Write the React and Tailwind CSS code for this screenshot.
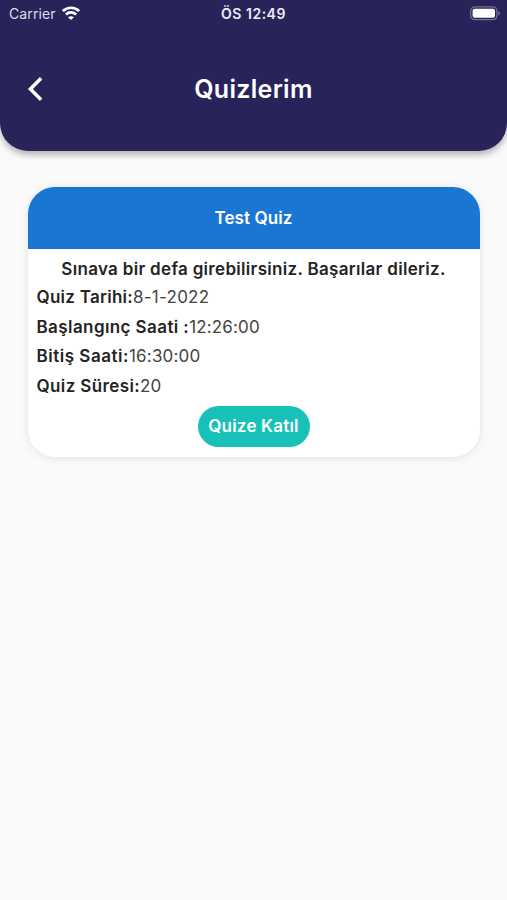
import React from "react";

const details = [
  { label: "Quiz Tarihi:", value: "8-1-2022", labelClass: "tracking-[0.27px]", valueClass: "tracking-[0.25px]" },
  { label: "Başlangınç Saati :", value: "12:26:00", labelClass: "tracking-[0.41px]", valueClass: "tracking-[0.15px]" },
  { label: "Bitiş Saati:", value: "16:30:00", labelClass: "tracking-[0.52px]", valueClass: "tracking-[0.2px]" },
  { label: "Quiz Süresi:", value: "20", labelClass: "tracking-[0.38px]", valueClass: "tracking-[0.1px]" },
];

function WifiIcon() {
  return (
    <svg className="-mt-px h-[14px] w-[18px]" viewBox="0 0 18 14" fill="none" stroke="white" strokeWidth="2.7">
      <path d="M0.9 5.1C5.4 0.6 12.6 0.6 17.1 5.1" />
      <path d="M3.9 8.5C6.7 5.7 11.3 5.7 14.1 8.5" />
      <path d="M9 14L6 11.2C7.6 9.8 10.4 9.8 12 11.2Z" fill="white" stroke="none" />
    </svg>
  );
}

function BatteryIcon() {
  return (
    <svg className="h-[15px] w-[31px]" viewBox="0 0 31 15" fill="none">
      <rect x="0.7" y="0.9" width="26.2" height="12.8" rx="4" stroke="#76729a" strokeWidth="1.2" />
      <rect x="2.6" y="2.8" width="22.4" height="9" rx="2" fill="white" />
      <path d="M28.3 5.1C30.5 5.9 30.5 8.7 28.3 9.5Z" fill="#76729a" />
    </svg>
  );
}

function Header() {
  return (
    <header className="h-[151px] rounded-b-[28px] bg-[#282359] text-white shadow-[0_4px_6px_rgba(0,0,0,0.28)]">
      <div className="grid h-[27px] grid-cols-3 items-center pl-[6px] pr-[6px]">
        <div className="flex items-center gap-[6px] pl-[3px] text-[14px] text-[#dedde8]">
          <span className="tracking-[0.12px]">Carrier</span>
          <WifiIcon />
        </div>
        <span className="text-center text-[14px] font-semibold tracking-[0.5px] text-[#eeedf5]">ÖS 12:49</span>
        <div className="flex justify-end">
          <BatteryIcon />
        </div>
      </div>
      <div className="grid h-[124px] grid-cols-[60px_1fr_60px] items-center">
        <button className="pl-[27px]" aria-label="Geri">
          <svg className="h-[26px] w-[17px]" viewBox="0 0 17 26" fill="none" stroke="white" strokeWidth="3.5">
            <path d="M14.1 2.3L3.4 13L14.1 23.7" />
          </svg>
        </button>
        <h1 className="text-center text-[25px] font-semibold leading-[30px] tracking-[0.3px]">Quizlerim</h1>
      </div>
    </header>
  );
}

function QuizCard() {
  return (
    <section className="mx-[27.5px] mt-[35.5px] h-[270px] overflow-hidden rounded-[27px] bg-white text-[17px] leading-[29.7px] text-[#242424] shadow-[0_1px_8px_rgba(0,0,0,0.1)]">
      <h2 className="flex h-[62.5px] items-center justify-center bg-[#1976d2] pt-[2px] font-semibold tracking-[0.1px] text-white">Test Quiz</h2>
      <div className="px-[9px] pt-[6px] whitespace-nowrap">
        <p className="text-center font-semibold leading-[28px] tracking-[0.31px]">Sınava bir defa girebilirsiniz. Başarılar dileriz.</p>
        {details.map((item) => (
          <p key={item.label}>
            <span className={`font-semibold ${item.labelClass}`}>{item.label}</span>
            <span className={`text-[#444444] ${item.valueClass}`}>{item.value}</span>
          </p>
        ))}
        <div className="flex justify-center pt-[4px]">
          <button className="h-[41px] w-[112px] rounded-full bg-[#17c1b8] pt-[2px] font-semibold tracking-[0.2px] text-white">Quize Katıl</button>
        </div>
      </div>
    </section>
  );
}

export default function App() {
  return (
    <main className="flow-root h-[900px] w-full overflow-hidden bg-[#fafafa] font-['Inter',sans-serif]">
      <Header />
      <QuizCard />
    </main>
  );
}
